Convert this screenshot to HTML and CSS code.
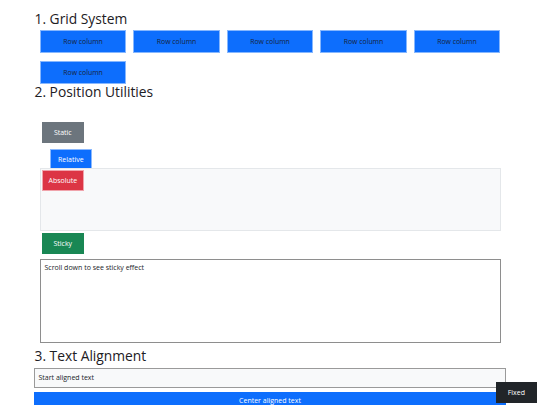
FILE: index.html
```html
<!DOCTYPE html>
<html lang="en">
<head>
<meta charset="utf-8">
<title>Utilities</title>
<link rel="stylesheet" href="styles.css">
</head>
<body>
<main class="page">
  <h2 class="title t1">1. Grid System</h2>
  <section class="section">
    <div class="grid">
      <div class="cell">Row column</div>
      <div class="cell">Row column</div>
      <div class="cell">Row column</div>
      <div class="cell">Row column</div>
      <div class="cell">Row column</div>
      <div class="cell">Row column</div>
    </div>
  </section>

  <h2 class="title t2">2. Position Utilities</h2>
  <section class="section pos">
    <div class="chip chip-static">Static</div>
    <div class="chip chip-relative">Relative</div>
    <div class="abs-box">
      <div class="chip chip-absolute">Absolute</div>
    </div>
    <div class="chip chip-sticky">Sticky</div>
    <div class="scroll-box">Scroll down to see sticky effect</div>
  </section>

  <h2 class="title t3">3. Text Alignment</h2>
  <div class="align-box align-start">Start aligned text</div>
  <div class="align-box align-center">Center aligned text</div>
</main>
<div class="fixed-chip">Fixed</div>
</body>
</html>
```

FILE: styles.css
```css
* { box-sizing: border-box; }
html, body { margin: 0; padding: 0; }
body {
  font-family: "Open Sans", "Noto Sans", sans-serif;
  color: #212529;
  background: #fff;
  width: 540px;
  height: 405px;
  overflow: hidden;
}
.page {
  width: 472px;
  margin-left: 34px;
}
.title {
  font-size: 13.8px;
  font-weight: 400;
  line-height: 16.2px;
  margin: 0;
  padding-left: 0.5px;
  color: #1d2024;
}
.t1 { padding-top: 10.8px; }
.t2 { margin-top: 0.7px; }
.t3 { margin-top: 5.2px; }

.section { padding: 0 5.5px; }

.grid {
  display: grid;
  grid-template-columns: repeat(5, 1fr);
  column-gap: 7.3px;
  row-gap: 8px;
  margin: 2.8px 0.5px 0;
}
.cell {
  height: 23px;
  background: #0d6efd;
  border: 1px solid #86b7fe;
  display: flex;
  align-items: center;
  justify-content: center;
  font-size: 6.9px;
  color: #17233b;
}

.pos { padding-top: 21px; }
.chip {
  width: 42px;
  height: 21px;
  display: flex;
  align-items: center;
  justify-content: center;
  font-size: 7px;
  color: #fff;
  margin-left: 2.3px;
}
.chip-static { background: #6c757d; }
.chip-relative {
  position: relative;
  top: 6px;
  left: 8px;
  background: #0d6efd;
  border: 1px solid #8bb9fe;
}
.abs-box {
  position: relative;
  height: 63px;
  margin-top: 4.3px;
  background: #f8f9fa;
  border: 1px solid #e4e7ea;
}
.chip-absolute {
  position: absolute;
  top: 1.4px;
  left: 1.4px;
  margin: 0;
  background: #dc3545;
  border: 1px solid #f0a3ab;
}
.chip-sticky {
  position: sticky;
  top: 0;
  margin-top: 2px;
  background: #198754;
}
.scroll-box {
  height: 84px;
  margin-top: 5px;
  border: 1px solid #8e8e8e;
  padding: 2.7px 4px;
  font-size: 7px;
  line-height: 10.5px;
}

.align-box {
  height: 19.5px;
  padding: 3.5px;
  font-size: 7px;
  line-height: 10.5px;
  border: 1px solid #9a9a9a;
}
.align-start {
  margin-top: 3.8px;
  background: #f8f9fa;
  text-align: left;
}
.align-center {
  margin-top: 4px;
  background: #0d6efd;
  border-color: #0d6efd;
  color: #fff;
  text-align: center;
}

.fixed-chip {
  position: fixed;
  right: 3px;
  bottom: 2px;
  width: 41.3px;
  height: 21.3px;
  background: #212529;
  color: #fff;
  font-size: 7px;
  display: flex;
  align-items: center;
  justify-content: center;
}
```
